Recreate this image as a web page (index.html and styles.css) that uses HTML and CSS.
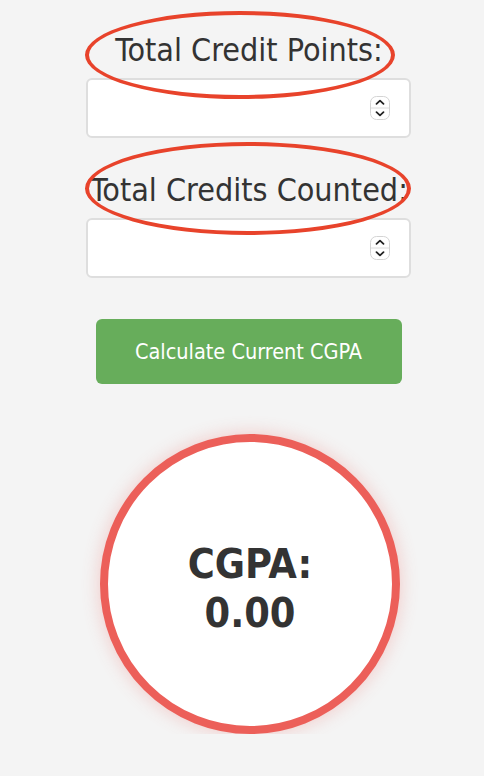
FILE: index.html
```html
<!DOCTYPE html>
<html>
<head>
<meta charset="utf-8">
<link rel="stylesheet" href="styles.css">
</head>
<body>
<main class="calc">
  <div class="field">
    <div class="label-wrap">
      <label class="label">Total Credit Points:</label>
      <span class="mark mark-1"></span>
    </div>
    <div class="input">
      <span class="spin">
        <svg width="20" height="24" viewBox="0 0 20 24">
          <rect x="0.5" y="0.5" width="19" height="23" rx="6" fill="#fff" stroke="#d4d4d4"/>
          <line x1="1" y1="12" x2="19" y2="12" stroke="#dcdcdc"/>
          <path d="M6.5 7.8 L10 4.6 L13.5 7.8" fill="none" stroke="#222" stroke-width="1.8" stroke-linecap="round" stroke-linejoin="round"/>
          <path d="M6.5 16.2 L10 19.4 L13.5 16.2" fill="none" stroke="#222" stroke-width="1.8" stroke-linecap="round" stroke-linejoin="round"/>
        </svg>
      </span>
    </div>
  </div>
  <div class="field">
    <div class="label-wrap">
      <label class="label">Total Credits Counted:</label>
      <span class="mark mark-2"></span>
    </div>
    <div class="input">
      <span class="spin">
        <svg width="20" height="24" viewBox="0 0 20 24">
          <rect x="0.5" y="0.5" width="19" height="23" rx="6" fill="#fff" stroke="#d4d4d4"/>
          <line x1="1" y1="12" x2="19" y2="12" stroke="#dcdcdc"/>
          <path d="M6.5 7.8 L10 4.6 L13.5 7.8" fill="none" stroke="#222" stroke-width="1.8" stroke-linecap="round" stroke-linejoin="round"/>
          <path d="M6.5 16.2 L10 19.4 L13.5 16.2" fill="none" stroke="#222" stroke-width="1.8" stroke-linecap="round" stroke-linejoin="round"/>
        </svg>
      </span>
    </div>
  </div>
  <button class="btn">Calculate Current CGPA</button>
  <div class="result">
    <div class="result-text">CGPA:<br>0.00</div>
  </div>
</main>
</body>
</html>
```

FILE: styles.css
```css
html, body {
  margin: 0;
  padding: 0;
  background: #f4f4f4;
}
body {
  font-family: "DejaVu Sans Condensed", "DejaVu Sans", sans-serif;
  color: #333;
}
.calc {
  width: 325px;
  margin-left: 86px;
  padding-top: 30px;
  display: flex;
  flex-direction: column;
}
.field {
  display: flex;
  flex-direction: column;
}
.field + .field {
  margin-top: 32px;
}
.label-wrap {
  position: relative;
  display: flex;
  justify-content: center;
  padding-left: 1px;
}
.label {
  font-size: 32px;
  line-height: 40px;
  color: #333;
  white-space: nowrap;
}
.mark {
  position: absolute;
  z-index: 2;
  border: 4px solid #e8432b;
  border-radius: 50%;
  box-sizing: border-box;
}
.mark-1 {
  left: -1px;
  width: 310px;
  top: -19px;
  height: 88px;
}
.mark-2 {
  left: -1px;
  width: 326px;
  top: -28px;
  height: 93px;
}
.input {
  position: relative;
  height: 60px;
  margin-top: 8px;
  background: #fff;
  border: 2px solid #dedede;
  border-radius: 6px;
  box-sizing: border-box;
}
.spin {
  position: absolute;
  right: 19px;
  top: 16px;
  width: 20px;
  height: 24px;
  display: block;
}
.spin svg { display: block; }
.btn {
  align-self: center;
  margin-top: 41px;
  width: 306px;
  height: 65px;
  border: 0;
  border-radius: 6px;
  background: #67ad5b;
  color: #fff;
  font-family: "DejaVu Sans Condensed", "DejaVu Sans", sans-serif;
  font-size: 21.5px;
}
.result {
  align-self: center;
  margin-top: 50px;
  margin-left: 3px;
  width: 300px;
  height: 300px;
  box-sizing: border-box;
  border: 8px solid #ec5f59;
  border-radius: 50%;
  background: #fff;
  box-shadow: 0 0 18px rgba(236, 95, 89, 0.3);
  display: flex;
  align-items: center;
  justify-content: center;
}
.result-text {
  font-size: 41px;
  font-weight: bold;
  line-height: 49px;
  text-align: center;
  color: #333;
  margin-top: 10px;
}
```
